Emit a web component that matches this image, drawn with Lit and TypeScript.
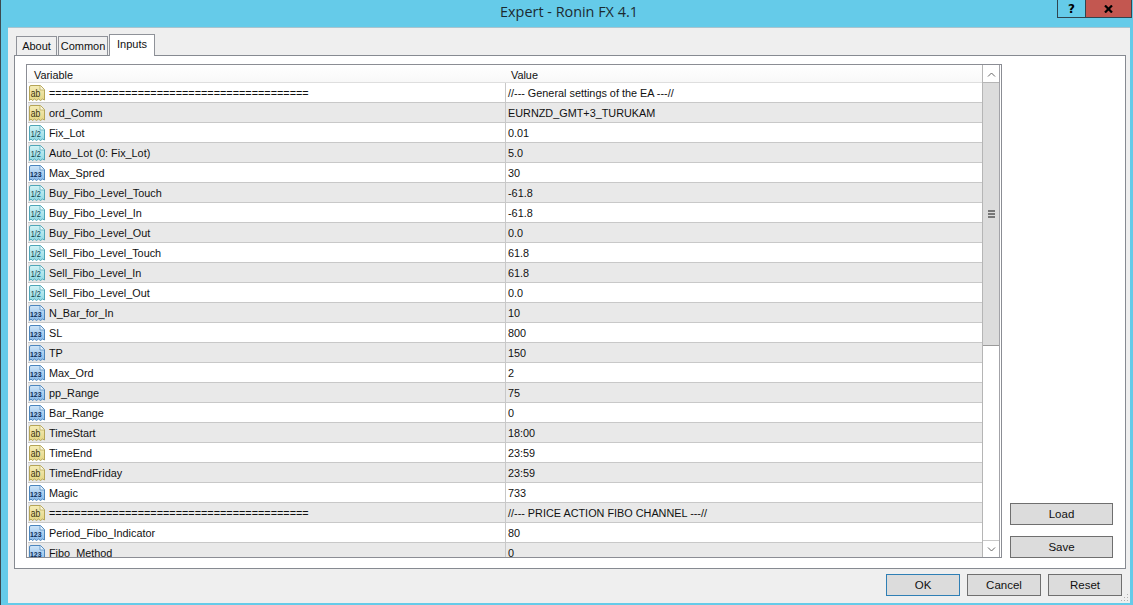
import { LitElement, html, css, svg } from "lit";
import { customElement } from "lit/decorators.js";

type Kind = "ab" | "half" | "int";

const SEP = "=".repeat(41);

const rows: [Kind, string, string][] = [
  ["ab", SEP, "//--- General settings of the EA ---//"],
  ["ab", "ord_Comm", "EURNZD_GMT+3_TURUKAM"],
  ["half", "Fix_Lot", "0.01"],
  ["half", "Auto_Lot (0: Fix_Lot)", "5.0"],
  ["int", "Max_Spred", "30"],
  ["half", "Buy_Fibo_Level_Touch", "-61.8"],
  ["half", "Buy_Fibo_Level_In", "-61.8"],
  ["half", "Buy_Fibo_Level_Out", "0.0"],
  ["half", "Sell_Fibo_Level_Touch", "61.8"],
  ["half", "Sell_Fibo_Level_In", "61.8"],
  ["half", "Sell_Fibo_Level_Out", "0.0"],
  ["int", "N_Bar_for_In", "10"],
  ["int", "SL", "800"],
  ["int", "TP", "150"],
  ["int", "Max_Ord", "2"],
  ["int", "pp_Range", "75"],
  ["int", "Bar_Range", "0"],
  ["ab", "TimeStart", "18:00"],
  ["ab", "TimeEnd", "23:59"],
  ["ab", "TimeEndFriday", "23:59"],
  ["int", "Magic", "733"],
  ["ab", SEP, "//--- PRICE ACTION FIBO CHANNEL ---//"],
  ["int", "Period_Fibo_Indicator", "80"],
  ["int", "Fibo_Method", "0"],
];

const iconColors: Record<Kind, { top: string; bottom: string; stroke: string; label: string }> = {
  ab: { top: "#f5edb8", bottom: "#e4d585", stroke: "#b5a557", label: "#3a330a" },
  half: { top: "#d2f3f6", bottom: "#8fd8e2", stroke: "#4fa6b8", label: "#0b3a46" },
  int: { top: "#cfe5f8", bottom: "#88b9e8", stroke: "#4c86be", label: "#0a2a55" },
};

function typeIcon(kind: Kind) {
  const c = iconColors[kind];
  const text =
    kind === "ab"
      ? svg`<text x="1.700" y="12" font-size="10" textLength="9.500" lengthAdjust="spacingAndGlyphs">ab</text>`
      : kind === "half"
        ? svg`<text x="1.700" y="11.500" font-size="8.500" textLength="10" lengthAdjust="spacingAndGlyphs">1/2</text>`
        : svg`<text x="1" y="11.500" font-size="7.500" font-weight="bold" textLength="11.500" lengthAdjust="spacingAndGlyphs">123</text>`;
  return html`<svg class="type-icon" width="16" height="16" viewBox="0 0 16 16">
    <defs>
      <linearGradient id="page-${kind}" x1="0" y1="0" x2="0" y2="1">
        <stop offset="0" stop-color=${c.top} />
        <stop offset="1" stop-color=${c.bottom} />
      </linearGradient>
    </defs>
    <path
      d="M.5 2Q.5 .5 2 .5H11.500L15.500 4.500V15L13.500 14 11.500 15.500 9.500 14 7.500 15.500 5.500 14 3.500 15.500 2 14 .5 15.500Z"
      fill="url(#page-${kind})"
      stroke=${c.stroke}
    />
    <path d="M11 .5V5H15.500" fill="#fff" fill-opacity=".6" stroke=${c.stroke} stroke-opacity=".7" />
    <g fill=${c.label} font-family="'Liberation Sans', sans-serif">${text}</g>
  </svg>`;
}

@customElement("app-root")
export class AppRoot extends LitElement {
  static styles = css`
    :host {
      display: flex;
      flex-direction: column;
      width: 1133px;
      height: 605px;
      box-sizing: border-box;
      overflow: hidden;
      background: #65cbe9;
      border-left: 1px solid #3c4a50;
      font-family: "Liberation Sans", Arial, sans-serif;
      font-size: 10.85px;
      color: #111;
    }

    .titlebar {
      display: grid;
      grid-template-columns: 1fr auto 1fr;
      height: 27px;
      flex: none;
    }

    .title {
      grid-column: 2;
      margin-left: 4px;
      font-family: "Open Sans", sans-serif;
      font-size: 14.4px;
      line-height: 23px;
      color: #1c2a30;
    }

    .window-buttons {
      grid-column: 3;
      justify-self: end;
      display: flex;
      height: 18px;
      border: 1px solid #2f4550;
      border-top: 0;
      box-sizing: border-box;
      margin-right: 1px;
    }

    .window-buttons span {
      display: flex;
      align-items: center;
      justify-content: center;
      font-family: "DejaVu Sans", sans-serif;
      font-weight: bold;
      color: #000;
    }

    .help {
      width: 27px;
      font-size: 12px;
      border-right: 1px solid #2f4550;
    }

    .close {
      width: 45px;
      background: #c35750;
    }

    .client {
      position: relative;
      flex: 1;
      display: flex;
      flex-direction: column;
      margin: 0 3px 2px 7px;
      padding: 6px 4px 0 6px;
      background: #efefef;
      border-top: 1px solid #a9c4cf;
      min-height: 0;
    }

    .tabs {
      display: flex;
      align-items: flex-end;
      gap: 1px;
      height: 21px;
      padding-left: 2px;
      flex: none;
    }

    .tab {
      box-sizing: border-box;
      height: 19px;
      padding-top: 3px;
      text-align: center;
      font-size: 11px;
      background: #f0f0f0;
      border: 1px solid #8f9299;
      border-bottom: 0;
    }

    .tab.active {
      height: 22px;
      margin-bottom: -1px;
      background: #fff;
      position: relative;
      z-index: 1;
    }

    .panel {
      display: flex;
      gap: 8px;
      box-sizing: border-box;
      height: 514px;
      padding: 8px 12px 10px 11px;
      background: #fff;
      border: 1px solid #868a91;
      flex: none;
    }

    .list {
      display: flex;
      width: 976px;
      box-sizing: border-box;
      border: 1px solid #8b8d94;
      background: #fff;
      overflow: hidden;
      flex: none;
    }

    .table {
      flex: 1;
      min-width: 0;
      overflow: hidden;
      padding-left: 1px;
    }

    .row {
      display: grid;
      grid-template-columns: 477px 1fr;
      box-sizing: border-box;
      height: 20px;
      border-bottom: 1px solid #c8c8c8;
      line-height: 21px;
      white-space: nowrap;
    }

    .row:nth-child(odd) {
      background: #e9e9e9;
    }

    .row.head {
      height: 18px;
      background: linear-gradient(#fff, #f8f8f8);
      line-height: 21px;
      border-bottom: 1px solid #dedede;
    }

    .row.head > div:first-child {
      padding-left: 6px;
    }

    .row.head > div:last-child {
      padding-left: 6px;
    }

    .name {
      display: flex;
      align-items: center;
      gap: 4px;
      height: 19px;
      padding-left: 1px;
    }

    .name span {
      margin-top: 2px;
    }

    .type-icon {
      flex: none;
    }

    .value {
      box-sizing: border-box;
      height: 19px;
      padding-left: 2px;
      border-left: 1px solid #c8c8c8;
    }

    .scroll {
      display: flex;
      flex-direction: column;
      flex: none;
      width: 18px;
      box-sizing: border-box;
      border-left: 1px solid #b5b5b5;
      border-right: 1px solid #a3a3a8;
      margin-right: 1px;
    }

    .scroll .arrow {
      display: flex;
      align-items: center;
      justify-content: center;
      height: 17px;
      flex: none;
      background: #fff;
      box-sizing: border-box;
    }

    .scroll .arrow.up {
      height: 18px;
      padding-top: 1px;
      border-bottom: 1px solid #b5b5b5;
    }

    .scroll .arrow.down {
      border-top: 1px solid #c8c8c8;
    }

    .thumb {
      display: flex;
      align-items: center;
      justify-content: center;
      flex: none;
      height: 263px;
      box-sizing: border-box;
      background: #dcdcdc;
      border-bottom: 1px solid #9a9a9a;
    }

    .grip {
      display: flex;
      flex-direction: column;
      gap: 1px;
    }

    .grip i {
      display: block;
      width: 7px;
      height: 2px;
      background: #777;
    }

    .track {
      flex: 1;
      background: #fff;
    }

    .side {
      display: flex;
      flex-direction: column;
      justify-content: flex-end;
      gap: 11px;
      width: 103px;
    }

    button {
      box-sizing: border-box;
      height: 22px;
      padding: 0;
      font: inherit;
      font-size: 11.5px;
      color: #111;
      background: #dcdcdc;
      border: 1px solid #6f6f6f;
      border-radius: 0;
    }

    .footer {
      display: flex;
      justify-content: flex-end;
      gap: 7px;
      padding: 5px 4px 0 0;
    }

    .footer button {
      width: 74px;
    }

    .footer button.default {
      border-color: #2f7fb5;
    }

    .size-grip {
      position: absolute;
      right: 1px;
      bottom: 1px;
    }
  `;

  render() {
    return html`
      <div class="titlebar">
        <div class="title">Expert - Ronin FX 4.1</div>
        <div class="window-buttons">
          <span class="help">?</span>
          <span class="close">
            <svg width="9" height="8" viewBox="0 0 9 8">
              <path d="M1 .5L8 7.500M8 .5L1 7.500" stroke="#000" stroke-width="2.200" fill="none" />
            </svg>
          </span>
        </div>
      </div>
      <div class="client">
        <div class="tabs">
          <div class="tab" style="width: 41px">About</div>
          <div class="tab" style="width: 50px">Common</div>
          <div class="tab active" style="width: 46px">Inputs</div>
        </div>
        <div class="panel">
          <div class="list">
            <div class="table">
              <div class="row head">
                <div>Variable</div>
                <div>Value</div>
              </div>
              ${rows.map(
                ([kind, name, value]) => html`
                  <div class="row">
                    <div class="name">${typeIcon(kind)}<span>${name}</span></div>
                    <div class="value">${value}</div>
                  </div>
                `,
              )}
            </div>
            <div class="scroll">
              <div class="arrow up">
                <svg width="9" height="5" viewBox="0 0 9 5">
                  <path d="M1 4.500L4.500 1 8 4.500" fill="none" stroke="#666" />
                </svg>
              </div>
              <div class="thumb">
                <div class="grip"><i></i><i></i><i></i></div>
              </div>
              <div class="track"></div>
              <div class="arrow down">
                <svg width="9" height="5" viewBox="0 0 9 5">
                  <path d="M1 .5L4.500 4 8 .5" fill="none" stroke="#666" />
                </svg>
              </div>
            </div>
          </div>
          <div class="side">
            <button>Load</button>
            <button>Save</button>
          </div>
        </div>
        <div class="footer">
          <button class="default">OK</button>
          <button>Cancel</button>
          <button>Reset</button>
        </div>
        <svg class="size-grip" width="9" height="9" viewBox="0 0 9 9" fill="#b0b0b0">
          <rect x="7" y="1" width="1" height="1" />
          <rect x="4" y="4" width="1" height="1" />
          <rect x="7" y="4" width="1" height="1" />
          <rect x="1" y="7" width="1" height="1" />
          <rect x="4" y="7" width="1" height="1" />
          <rect x="7" y="7" width="1" height="1" />
        </svg>
      </div>
    `;
  }
}
